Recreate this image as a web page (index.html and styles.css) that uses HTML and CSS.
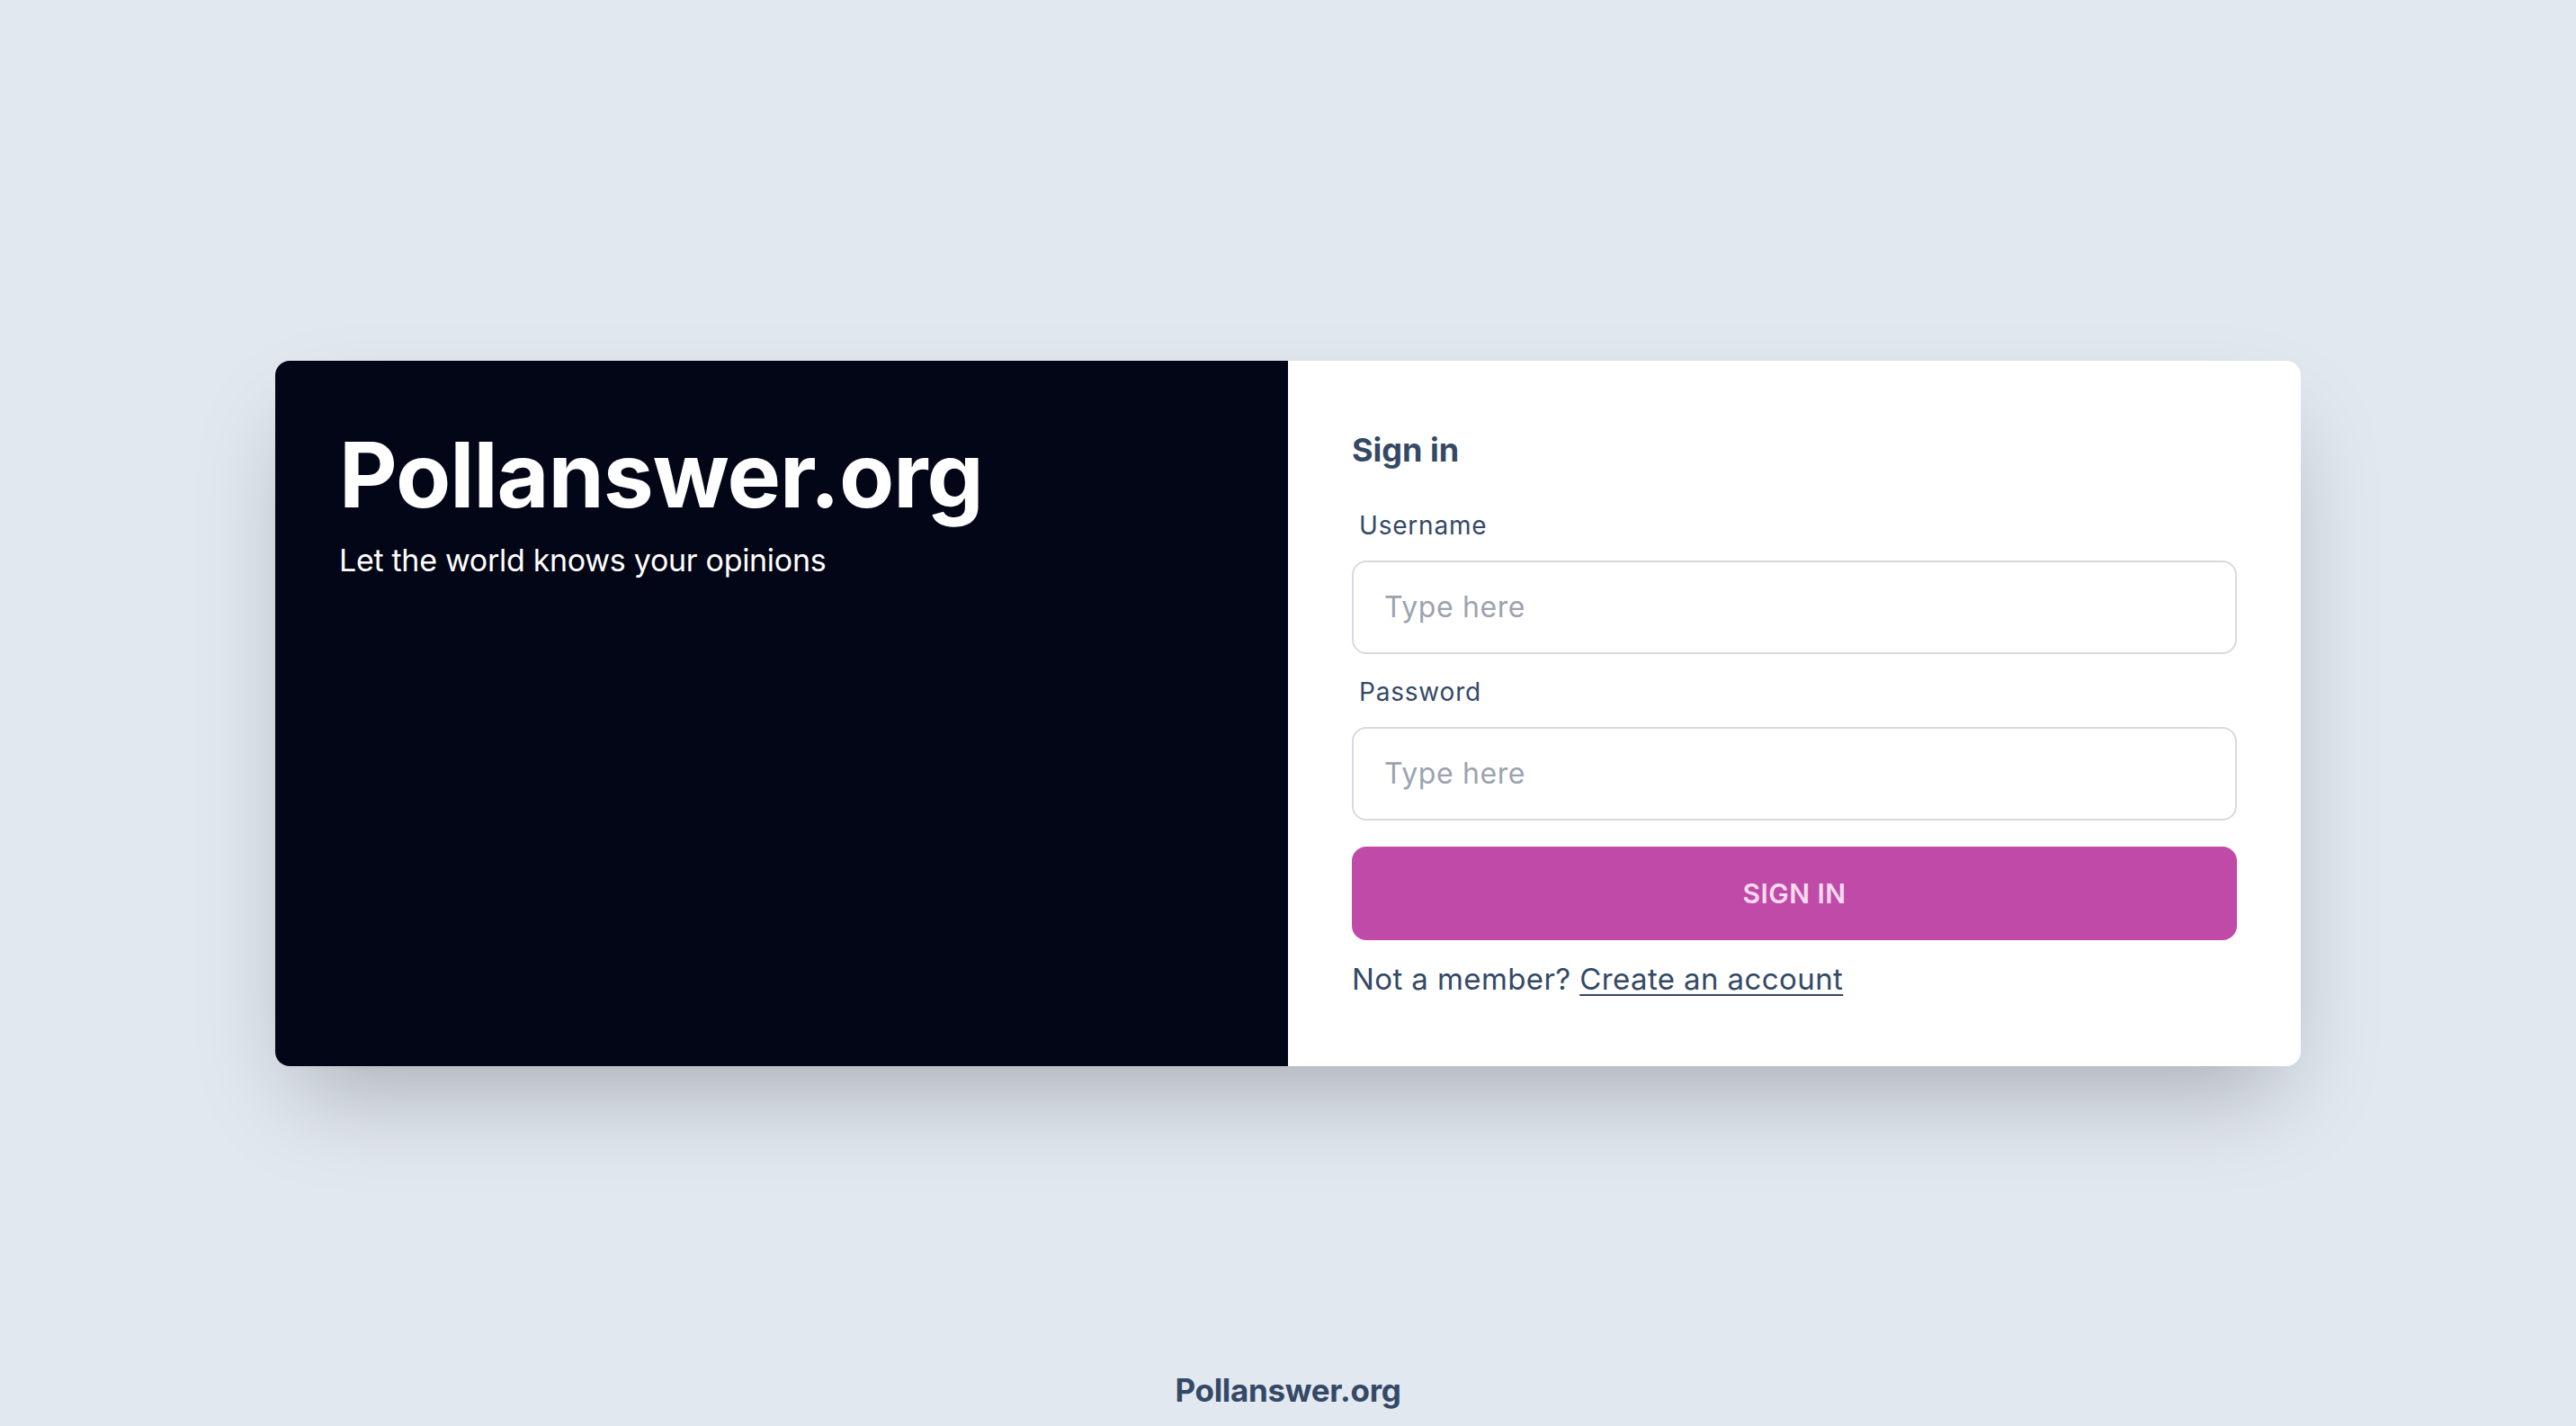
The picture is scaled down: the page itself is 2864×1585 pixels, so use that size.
FILE: index.html
```html
<!DOCTYPE html>
<html lang="en">
<head>
<meta charset="utf-8">
<title>Pollanswer.org - Sign in</title>
<link rel="stylesheet" href="styles.css">
</head>
<body>
<div class="page">
  <main class="main">
    <div class="card">
      <section class="hero">
        <h1 class="hero-title">Pollanswer.org</h1>
        <p class="hero-sub">Let the world knows your opinions</p>
      </section>
      <section class="form-side">
        <h2 class="form-title">Sign in</h2>
        <form class="form">
          <label class="label" for="username">Username</label>
          <input class="input" id="username" type="text" placeholder="Type here">
          <label class="label label-2" for="password">Password</label>
          <input class="input" id="password" type="password" placeholder="Type here">
          <button class="btn" type="button">Sign in</button>
        </form>
        <p class="register">Not a member? <a href="#" class="register-link">Create an account</a></p>
      </section>
    </div>
  </main>
  <footer class="footer">Pollanswer.org</footer>
</div>
</body>
</html>
```

FILE: styles.css
```css
* { box-sizing: border-box; }
html, body { margin: 0; padding: 0; }
body {
  background: #e2e8f0;
  font-family: Inter, "Noto Sans", sans-serif;
  color: #344966;
}
.page {
  height: 100vh;
  display: grid;
  grid-template-rows: 1fr auto 1fr;
}
.main {
  grid-row: 2;
  display: flex;
  justify-content: center;
}
.card {
  width: 2252px;
  height: 784px;
  display: flex;
  border-radius: 16px;
  overflow: hidden;
  background: #ffffff;
  box-shadow: 0 50px 100px -24px rgba(0, 0, 0, 0.25);
}
.hero {
  width: 50%;
  background: #020617;
  color: #ffffff;
  padding: 77px 71px;
}
.hero-title {
  margin: 0;
  font-size: 100px;
  line-height: 100px;
  font-weight: 700;
  letter-spacing: -1px;
}
.hero-sub {
  margin: 17px 0 0;
  font-size: 34px;
  line-height: 56px;
  font-weight: 400;
  letter-spacing: -0.3px;
}
.form-side {
  width: 50%;
  padding: 71px 71px 0 71px;
  display: flex;
  flex-direction: column;
}
.form-title {
  margin: 0;
  font-size: 36px;
  line-height: 56px;
  font-weight: 700;
}
.form {
  display: flex;
  flex-direction: column;
  margin-top: 20px;
}
.label {
  font-size: 28px;
  line-height: 40px;
  padding: 16px 8px 19px;
  letter-spacing: 0.8px;
}
.label-2 { padding-top: 22px; }
.input {
  height: 104px;
  width: 100%;
  border: 2px solid #d6dae0;
  border-radius: 16px;
  padding: 0 34px;
  font-family: inherit;
  font-size: 32px;
  letter-spacing: 0.6px;
  color: #344966;
  background: #ffffff;
  outline: none;
}
.input::placeholder { color: #9ca3af; }
.btn {
  margin-top: 29px;
  height: 104px;
  width: 100%;
  border: none;
  border-radius: 16px;
  background: #c04aa8;
  color: #fbdaef;
  font-family: inherit;
  font-size: 30px;
  font-weight: 600;
  letter-spacing: 0.5px;
  text-transform: uppercase;
  cursor: pointer;
}
.register {
  margin: 19px 0 0;
  font-size: 33px;
  line-height: 48px;
  letter-spacing: 0.4px;
}
.register-link {
  color: inherit;
  text-decoration: underline;
  text-decoration-thickness: 2px;
  text-underline-offset: 5px;
}
.footer {
  grid-row: 3;
  align-self: end;
  text-align: center;
  font-size: 35px;
  line-height: 56px;
  font-weight: 700;
  letter-spacing: -0.3px;
  padding-bottom: 12px;
}
```
